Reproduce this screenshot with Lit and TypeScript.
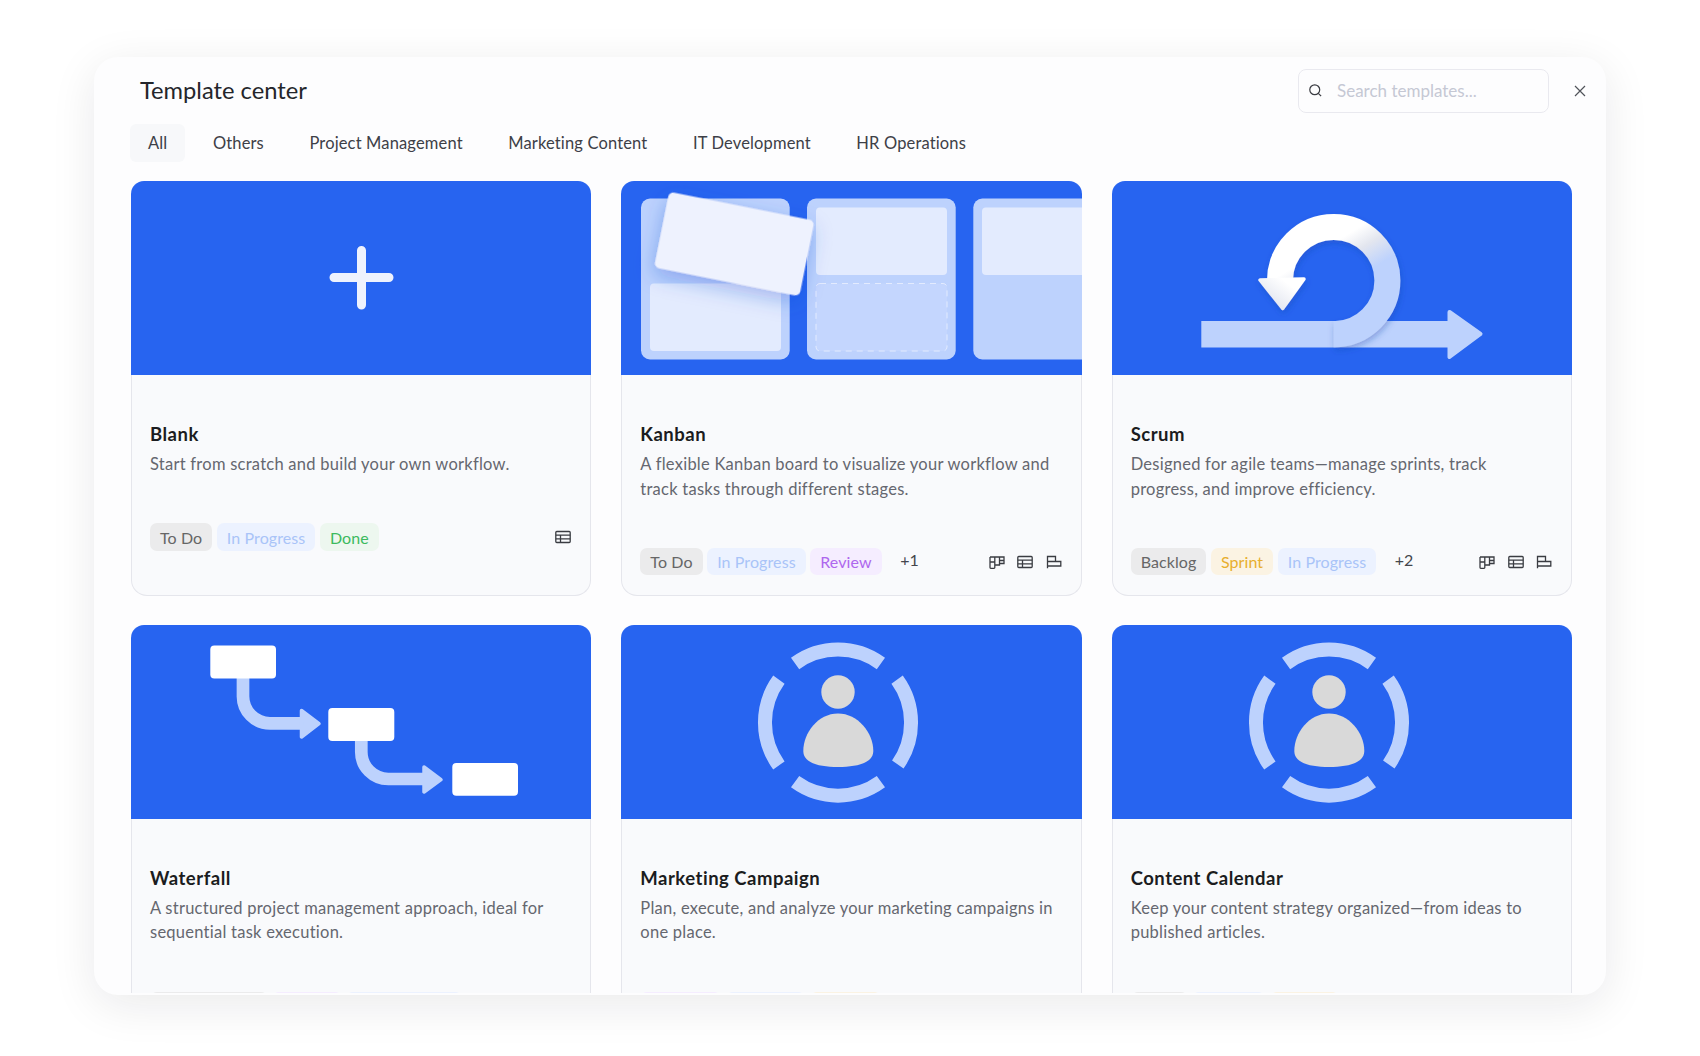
import { LitElement, html, css, svg, TemplateResult, SVGTemplateResult } from 'lit';
import { customElement } from 'lit/decorators.js';

type TagKind = 'gray' | 'blue' | 'green' | 'purple' | 'yellow';
type ViewKind = 'board' | 'table' | 'gantt';
type Art = 'plus' | 'kanban' | 'scrum' | 'waterfall' | 'person';

interface Template {
  title: string;
  desc: string;
  art: Art;
  tags: [string, TagKind][];
  more?: string;
  views: ViewKind[];
}

const TABS = [
  'All',
  'Others',
  'Project Management',
  'Marketing Content',
  'IT Development',
  'HR Operations',
];

const TEMPLATES: Template[] = [
  {
    title: 'Blank',
    desc: 'Start from scratch and build your own workflow.',
    art: 'plus',
    tags: [['To Do', 'gray'], ['In Progress', 'blue'], ['Done', 'green']],
    views: ['table'],
  },
  {
    title: 'Kanban',
    desc: 'A flexible Kanban board to visualize your workflow and track tasks through different stages.',
    art: 'kanban',
    tags: [['To Do', 'gray'], ['In Progress', 'blue'], ['Review', 'purple']],
    more: '+1',
    views: ['board', 'table', 'gantt'],
  },
  {
    title: 'Scrum',
    desc: 'Designed for agile teams—manage sprints, track progress, and improve efficiency.',
    art: 'scrum',
    tags: [['Backlog', 'gray'], ['Sprint', 'yellow'], ['In Progress', 'blue']],
    more: '+2',
    views: ['board', 'table', 'gantt'],
  },
  {
    title: 'Waterfall',
    desc: 'A structured project management approach, ideal for sequential task execution.',
    art: 'waterfall',
    tags: [['Requirements', 'gray'], ['Design', 'purple'], ['Development', 'blue']],
    views: ['table', 'gantt'],
  },
  {
    title: 'Marketing Campaign',
    desc: 'Plan, execute, and analyze your marketing campaigns in one place.',
    art: 'person',
    tags: [['Planning', 'purple'], ['Creative', 'blue'], ['Launch', 'yellow']],
    views: ['board', 'table'],
  },
  {
    title: 'Content Calendar',
    desc: 'Keep your content strategy organized—from ideas to published articles.',
    art: 'person',
    tags: [['Ideas', 'gray'], ['Writing', 'blue'], ['Editing', 'yellow']],
    views: ['board', 'table'],
  },
];

const LIGHT = '#bdd2fd';

// ring segment around the person figure, angles counted clockwise from 12 o'clock
function ringArc(from: number, to: number): SVGTemplateResult {
  const cx = 217;
  const cy = 97.6;
  const r = 73;
  const pt = (deg: number) => {
    const a = (deg * Math.PI) / 180;
    return `${(cx + r * Math.sin(a)).toFixed(1)} ${(cy - r * Math.cos(a)).toFixed(1)}`;
  };
  return svg`<path d="M${pt(from)} A${r} ${r} 0 0 1 ${pt(to)}" fill="none" stroke=${LIGHT} stroke-width="14" />`;
}

const ARTS: Record<Art, SVGTemplateResult> = {
  plus: svg`
    <path d="M203 96.500 H258 M230.500 69.500 V124" fill="none" stroke="#eef2fd" stroke-width="9" stroke-linecap="round" />
  `,
  kanban: svg`
    <defs>
      <filter id="lift" x="-30%" y="-40%" width="160%" height="190%">
        <feDropShadow dx="0" dy="7" stdDeviation="10" flood-color="#1d4fd0" flood-opacity="0.32" />
      </filter>
    </defs>
    <rect x="20" y="17.500" width="148.700" height="161" rx="9" fill=${LIGHT} />
    <rect x="29" y="102.500" width="131" height="67.500" rx="4" fill="#e3ebfe" />
    <rect x="186" y="17.500" width="148.700" height="161" rx="9" fill=${LIGHT} />
    <rect x="195" y="26.500" width="131" height="67.500" rx="4" fill="#e3ebfe" />
    <rect x="195" y="102.500" width="131" height="67.500" rx="4" fill="#c4d6fe" stroke="#e3ebfe" stroke-dasharray="6 5" />
    <rect x="352.300" y="17.500" width="148.700" height="161" rx="9" fill=${LIGHT} />
    <rect x="361" y="26.500" width="131" height="67.500" rx="4" fill="#e3ebfe" />
    <rect x="39.300" y="24.500" width="148" height="77" rx="5" fill="#eef2fe" filter="url(#lift)" transform="rotate(11.300 113.300 63)" />
  `,
  scrum: svg`
    <defs>
      <linearGradient id="loop" gradientUnits="userSpaceOnUse" x1="244" y1="48" x2="266" y2="84">
        <stop offset="0" stop-color="#ffffff" />
        <stop offset="0.45" stop-color="#e3e6ef" />
        <stop offset="1" stop-color=${LIGHT} />
      </linearGradient>
      <linearGradient id="tip" gradientUnits="userSpaceOnUse" x1="178" y1="104" x2="160" y2="128">
        <stop offset="0" stop-color="#ffffff" />
        <stop offset="1" stop-color="#dfe3ee" />
      </linearGradient>
      <filter id="soft" x="-20%" y="-20%" width="140%" height="140%">
        <feDropShadow dx="1" dy="3" stdDeviation="3" flood-color="#163fa8" flood-opacity="0.35" />
      </filter>
    </defs>
    <rect x="89.300" y="140" width="248" height="26.500" fill=${LIGHT} />
    <path d="M337.500 131 L368.500 153 L337.500 176 Z" fill=${LIGHT} stroke=${LIGHT} stroke-width="4" stroke-linejoin="round" />
    <g filter="url(#soft)">
      <path d="M221.700 153.300 A53.700 53.700 0 1 0 168 99.700" fill="none" stroke="url(#loop)" stroke-width="26" />
      <path d="M148 99 L192 98 L170.700 127.500 Z" fill="url(#tip)" stroke="url(#tip)" stroke-width="3.500" stroke-linejoin="round" />
    </g>
  `,
  waterfall: svg`
    <path d="M112 53 V71 A27 27 0 0 0 139 98.300 H171" fill="none" stroke=${LIGHT} stroke-width="12.700" />
    <path d="M170.500 85.500 L188 98.600 L170.500 112 Z" fill=${LIGHT} stroke=${LIGHT} stroke-width="3.500" stroke-linejoin="round" />
    <path d="M230.300 115 V127 A27 27 0 0 0 257.300 154 H293" fill="none" stroke=${LIGHT} stroke-width="12.700" />
    <path d="M293 142 L310 154.600 L293 167 Z" fill=${LIGHT} stroke=${LIGHT} stroke-width="3.500" stroke-linejoin="round" />
    <rect x="79.300" y="20.600" width="65.700" height="33" rx="4" fill="#fff" />
    <rect x="197.300" y="83" width="66" height="33" rx="4" fill="#fff" />
    <rect x="321.300" y="138" width="65.700" height="32.700" rx="4" fill="#fff" />
  `,
  person: svg`
    ${ringArc(-36, 36)}
    ${ringArc(54, 125)}
    ${ringArc(144, 216)}
    ${ringArc(234, 306)}
    <circle cx="217" cy="67" r="16.700" fill="#d9d9d9" />
    <path d="M217 88.600 C197 88.600 182.300 108 182.300 126 C182.300 138 198 142 217 142 C236 142 252.300 138 252.300 126 C252.300 108 237 88.600 217 88.600 Z" fill="#d9d9d9" />
  `,
};

const VIEW_ICONS: Record<ViewKind, SVGTemplateResult> = {
  table: svg`
    <rect x="0.800" y="2.500" width="14.400" height="11" rx="1" />
    <path d="M0.800 6.200 H15.200 M0.800 9.800 H15.200 M5.500 6.200 V13.500" />
  `,
  board: svg`
    <path d="M1 3 H15 V9.500 H10.500 V3 M5.800 3 V11 H10.500 V9.500 M1 3 V13.500 Q1 14.300 1.800 14.300 H5 Q5.800 14.300 5.800 13.500 V11 M1 8 H5.800 M10.500 6.500 H15" />
  `,
  gantt: svg`
    <path d="M1.500 1.800 V14.300 M1.500 2.500 H9.500 V7.500 H1.500 M9.500 7.500 H14.800 V12 H1.500" />
  `,
};

@customElement('app-root')
export class AppRoot extends LitElement {
  renderCard(t: Template): TemplateResult {
    return html`
      <article class="card">
        <div class="hero">
          <svg viewBox="0 0 461 194" width="100%" height="194" preserveAspectRatio="xMinYMin slice">
            ${ARTS[t.art]}
          </svg>
        </div>
        <div class="body">
          <h3>${t.title}</h3>
          <p>${t.desc}</p>
          <div class="footer">
            <div class="tags">
              ${t.tags.map(([label, kind]) => html`<span class="tag ${kind}">${label}</span>`)}
              ${t.more ? html`<span class="more">${t.more}</span>` : ''}
            </div>
            <div class="views">
              ${t.views.map(
                (v) => html`<svg class="view" viewBox="0 0 16 16" width="16" height="16">${VIEW_ICONS[v]}</svg>`,
              )}
            </div>
          </div>
        </div>
      </article>
    `;
  }

  render(): TemplateResult {
    return html`
      <section class="modal">
        <header>
          <h2>Template center</h2>
          <div class="search">
            <svg viewBox="0 0 16 16" width="15" height="15">
              <circle cx="7.200" cy="7.200" r="5.300" />
              <path d="M11 11 L14 14" />
            </svg>
            <span>Search templates...</span>
          </div>
          <svg class="close" viewBox="0 0 12 12" width="12" height="12">
            <path d="M1 1 L11 11 M11 1 L1 11" />
          </svg>
        </header>
        <nav>
          ${TABS.map((t, i) => html`<span class="tab ${i === 0 ? 'active' : ''}">${t}</span>`)}
        </nav>
        <div class="scroll">
          <div class="grid">${TEMPLATES.map((t) => this.renderCard(t))}</div>
        </div>
      </section>
    `;
  }

  static styles = css`
    :host {
      display: block;
      box-sizing: border-box;
      height: 1056px;
      padding: 57px 94px 61px;
      background: #fff;
      font-family: 'Lato', 'Noto Sans', sans-serif;
      color: #1d1f24;
    }
    .modal {
      height: 100%;
      display: flex;
      flex-direction: column;
      background: #fdfdfe;
      border-radius: 24px;
      box-shadow: 0 10px 46px rgba(20, 20, 30, 0.09);
      overflow: hidden;
    }
    header {
      display: flex;
      align-items: center;
      padding: 12px 20px 0 46px;
    }
    h2 {
      margin: 0;
      flex: 1;
      padding-bottom: 3px;
      font-size: 23.700px;
      font-weight: 400;
      color: #24262b;
    }
    .search {
      box-sizing: border-box;
      width: 251px;
      height: 44px;
      display: flex;
      align-items: center;
      gap: 14px;
      padding: 0 9px 1px;
      border: 1px solid #e9e9ef;
      border-radius: 8px;
      background: #fdfdfe;
      font-size: 17px;
      color: #c5c8d4;
    }
    .search svg {
      fill: none;
      stroke: #3a3c42;
      stroke-width: 1.300;
    }
    .close {
      margin-left: 25px;
      fill: none;
      stroke: #50535a;
      stroke-width: 1.200;
    }
    nav {
      display: flex;
      gap: 9.500px;
      margin: 11px 0 0 36px;
    }
    .tab {
      height: 37.500px;
      display: flex;
      align-items: center;
      padding: 0 18px;
      border-radius: 6px;
      font-size: 16.500px;
      letter-spacing: 0.15px;
      color: #3d4047;
    }
    .tab.active {
      background: #f7f8fa;
    }
    .scroll {
      flex: 1;
      min-height: 0;
      margin: 19.500px 34px 2px 37px;
      overflow: hidden;
    }
    .grid {
      display: grid;
      grid-template-columns: repeat(3, 1fr);
      gap: 29px 30px;
    }
    .card {
      display: flex;
      flex-direction: column;
    }
    .hero {
      height: 194px;
      overflow: hidden;
      border-radius: 13px 13px 0 0;
      background: #2764f0;
    }
    .hero svg {
      display: block;
    }
    .body {
      flex: 1;
      padding: 47px 19px 19.500px 18px;
      background: #f9fafc;
      border: 1px solid #e5e6ec;
      border-top: 0;
      border-radius: 0 0 16px 16px;
    }
    h3 {
      margin: 0;
      font-size: 18.500px;
      line-height: 24px;
      font-weight: 700;
      letter-spacing: 0.5px;
      color: #1b1c20;
    }
    p {
      margin: 6px 0 0;
      font-size: 16.500px;
      line-height: 24.500px;
      letter-spacing: 0.25px;
      color: #65676f;
    }
    .footer {
      display: flex;
      align-items: center;
      justify-content: space-between;
      margin-top: 46.750px;
    }
    .tags {
      display: flex;
      align-items: center;
      gap: 4.500px;
    }
    .tag {
      height: 27.500px;
      display: flex;
      align-items: center;
      padding: 0 10px;
      border-radius: 7px;
      font-size: 16px;
      letter-spacing: 0.1px;
    }
    .gray {
      background: #ebebec;
      color: #666;
    }
    .blue {
      background: #ecf2ff;
      color: #a9c4f8;
    }
    .green {
      background: #edf7ef;
      color: #3cba5e;
    }
    .purple {
      background: #f5edff;
      color: #ae67ee;
    }
    .yellow {
      background: #fbf3e3;
      color: #e8ae2c;
    }
    .more {
      margin-left: 14px;
      padding-bottom: 4px;
      font-size: 16px;
      color: #44464c;
    }
    .views {
      display: flex;
      align-items: center;
      gap: 12.500px;
    }
    .view {
      fill: none;
      stroke: #3a3c42;
      stroke-width: 1.300;
    }
  `;
}
